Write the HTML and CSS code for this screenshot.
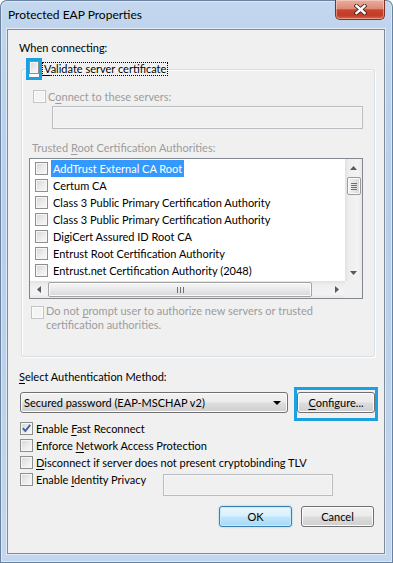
FILE: index.html
```html
<!DOCTYPE html>
<html>
<head>
<meta charset="utf-8">
<title>Protected EAP Properties</title>
<link rel="stylesheet" href="styles.css">
</head>
<body>
<div class="window">
  <div class="titlebar">
    <span class="title">Protected EAP Properties</span>
    <span class="close"><svg width="13" height="11" viewBox="0 0 13 11"><path d="M2.5 2 L10.5 9 M10.5 2 L2.5 9" stroke="#4a2018" stroke-width="4.2" stroke-linecap="square"/><path d="M2.5 2 L10.5 9 M10.5 2 L2.5 9" stroke="#fff" stroke-width="2.4" stroke-linecap="square"/></svg></span>
  </div>
  <div class="client">
    <div class="sec-label">When connecting:</div>
    <fieldset class="group">
      <legend class="legend">
        <span class="hl-box"><span class="cb cb-small"></span></span>
        <span class="focus"><u>V</u>alidate server certificate</span>
      </legend>
      <div class="gbody">
        <div class="connect"><span class="cb dis"></span><span class="clbl dis-text">C<u>o</u>nnect to these servers:</span></div>
        <div class="srv"></div>
        <div class="trl dis-text">Trusted <u>R</u>oot Certification Authorities:</div>
        <div class="list">
          <div class="items">
            <div class="item"><span class="cb"></span><span class="itxt sel">AddTrust External CA Root</span></div>
            <div class="item"><span class="cb"></span><span class="itxt">Certum CA</span></div>
            <div class="item"><span class="cb"></span><span class="itxt">Class 3 Public Primary Certification Authority</span></div>
            <div class="item"><span class="cb"></span><span class="itxt">Class 3 Public Primary Certification Authority</span></div>
            <div class="item"><span class="cb"></span><span class="itxt">DigiCert Assured ID Root CA</span></div>
            <div class="item"><span class="cb"></span><span class="itxt">Entrust Root Certification Authority</span></div>
            <div class="item"><span class="cb"></span><span class="itxt">Entrust.net Certification Authority (2048)</span></div>
          </div>
          <div class="vs">
            <div class="sarrow"><svg width="7" height="4" viewBox="0 0 7 4"><path d="M0 4 L3.5 0 L7 4 Z" fill="#5a5a5a"/></svg></div>
            <div class="vthumb"><span></span><span></span><span></span><span></span></div>
            <div class="sfill"></div>
            <div class="sarrow"><svg width="7" height="4" viewBox="0 0 7 4"><path d="M0 0 L3.5 4 L7 0 Z" fill="#5a5a5a"/></svg></div>
          </div>
          <div class="hs">
            <div class="sarrow"><svg width="4" height="7" viewBox="0 0 4 7"><path d="M4 0 L0 3.5 L4 7 Z" fill="#5a5a5a"/></svg></div>
            <div class="hthumb"><span></span><span></span><span></span></div>
            <div class="sfill"></div>
            <div class="sarrow"><svg width="4" height="7" viewBox="0 0 4 7"><path d="M0 0 L4 3.5 L0 7 Z" fill="#5a5a5a"/></svg></div>
          </div>
          <div class="corner"></div>
        </div>
        <div class="prompt"><span class="cb dis"></span><span class="ptxt dis-text">Do not <u>p</u>rompt user to authorize new servers or trusted<br>certification authorities.</span></div>
      </div>
    </fieldset>
    <div class="sec-label sel-lbl"><u>S</u>elect Authentication Method:</div>
    <div class="auth">
      <div class="btn combo"><span>Secured password (EAP-MSCHAP v2)</span><svg width="8" height="4" viewBox="0 0 8 4"><path d="M0 0 L8 0 L4 4 Z" fill="#000"/></svg></div>
      <div class="hl-btn"><div class="btn cfg"><u>C</u>onfigure...</div></div>
    </div>
    <div class="opts">
      <div class="opt"><span class="cb checked"><svg width="11" height="11" viewBox="0 0 11 11"><path d="M1.8 5.2 L4.3 8 L9.2 1.8" fill="none" stroke="#4c5f99" stroke-width="1.9"/></svg></span><span class="olbl">Enable <u>F</u>ast Reconnect</span></div>
      <div class="opt"><span class="cb"></span><span class="olbl">Enforce <u>N</u>etwork Access Protection</span></div>
      <div class="opt"><span class="cb"></span><span class="olbl"><u>D</u>isconnect if server does not present cryptobinding TLV</span></div>
      <div class="opt ident"><span class="cb"></span><span class="olbl idlbl">Enable <u>I</u>dentity Privacy</span><span class="idbox"></span></div>
    </div>
    <div class="actions">
      <div class="btn ok">OK</div>
      <div class="btn cancel">Cancel</div>
    </div>
  </div>
</div>
</body>
</html>
```

FILE: styles.css
```css
* { box-sizing: border-box; }
html, body { margin: 0; padding: 0; }
body {
  font-family: Lato, "Noto Sans", sans-serif;
  font-size: 11px;
  line-height: 15px;
  color: #000;
  background: #fff;
}
u { text-decoration: underline; text-underline-offset: 2px; }

.window {
  width: 393px;
  height: 563px;
  border-radius: 7px 7px 0 0;
  background: linear-gradient(180deg, #c3d7ee 0%, #bcd3ec 12%, #b7cfe9 40%, #bdd3ec 75%, #c3d7ee 100%);
  box-shadow: inset 0 0 0 1px #6a829f, inset 0 0 0 2px #dbe7f5;
  display: flex;
  flex-direction: column;
}
.titlebar {
  height: 29px;
  flex: none;
  display: flex;
  align-items: flex-start;
}
.title {
  padding: 7px 0 0 8px;
  font-size: 12px;
  color: #000;
}
.close {
  margin-left: auto;
  margin-right: 8px;
  width: 50px;
  height: 20px;
  border: 1px solid #7a3127;
  border-top: none;
  border-radius: 0 0 5px 5px;
  background: linear-gradient(180deg, #e9ad9e 0%, #dc8b79 45%, #c94530 52%, #c23a24 80%, #d9644a 100%);
  box-shadow: inset 0 0 0 1px rgba(255, 230, 220, 0.45);
  display: flex;
  align-items: center;
  justify-content: center;
}
.close svg { display: block; }

.client {
  margin: 0 8px 0 7px;
  height: 525px;
  border: 1px solid #7f8b99;
  background: #f0f0f0;
  padding-top: 10px;
  box-shadow: 0 0 0 1px rgba(255, 255, 255, 0.55);
}
.sec-label { margin-left: 11px; }

.group {
  margin: 3px 0 0 13px;
  width: 354px;
  padding: 0;
  border: 1px solid #d5dfe5;
  border-radius: 3px;
  box-shadow: inset 1px 1px 0 #ffffff, 1px 1px 0 #ffffff;
  min-width: 0;
}
.legend {
  padding: 0;
  margin-left: 4px;
  display: flex;
  align-items: center;
  height: 22px;
}
.hl-box {
  width: 16px;
  height: 22px;
  border: 3px solid #1ba1e2;
  background: #fff;
  display: flex;
  align-items: flex-start;
}
.focus {
  border: 1px dotted #000;
  padding: 0 1px 0 1px;
  height: 14px;
  line-height: 12px;
  display: inline-block;
}

.cb {
  flex: none;
  width: 13px;
  height: 13px;
  border: 1px solid #8e8f8f;
  background: linear-gradient(135deg, #d4d6d9 0%, #eeeeee 60%, #f8f8f8 100%);
  box-shadow: inset 0 0 0 1px #f6f6f6;
  display: inline-flex;
  align-items: center;
  justify-content: center;
}
.cb svg { display: block; }
.cb-small { width: 10px; height: 13px; }
.cb.dis {
  border-color: #c4c4c4;
  background: #f4f4f4;
  box-shadow: inset 0 0 0 1px #fbfbfb;
}
.dis-text { color: #9c9c9c; }

.gbody { padding: 9px 0 24px 0; }
.connect {
  display: flex;
  align-items: center;
  margin-left: 11px;
}
.clbl { margin-left: 2px; }
.srv {
  margin: 2px 0 0 30px;
  width: 311px;
  height: 23px;
  border: 1px solid #b9bcc0;
  background: #f0f0f0;
  box-shadow: inset 0 0 0 1px #f6f6f6;
}
.trl { margin: 11px 0 0 10px; }

.list {
  margin: 3px 0 0 7px;
  width: 334px;
  height: 141px;
  border: 1px solid #828790;
  background: #fff;
  display: grid;
  grid-template-columns: 1fr 17px;
  grid-template-rows: 1fr 17px;
}
.items {
  overflow: hidden;
  padding-top: 1px;
  min-width: 0;
}
.item {
  height: 17px;
  display: flex;
  align-items: center;
  white-space: nowrap;
}
.item .cb { margin-left: 5px; }
.itxt { margin-left: 3px; padding: 0 2px; line-height: 17px; }
.itxt.sel { background: #3399ff; color: #fff; }

.vs {
  display: flex;
  flex-direction: column;
  align-items: center;
  background: linear-gradient(90deg, #e2e2e2 0%, #efefef 25%, #f3f3f3 75%, #e8e8e8 100%);
}
.hs {
  display: flex;
  align-items: center;
  background: linear-gradient(180deg, #e2e2e2 0%, #efefef 25%, #f3f3f3 75%, #e8e8e8 100%);
}
.sarrow {
  width: 17px;
  height: 17px;
  flex: none;
  display: flex;
  align-items: center;
  justify-content: center;
}
.sfill { flex: 1; }
.vthumb {
  width: 14px;
  height: 18px;
  margin-top: 1px;
  border: 1px solid #9b9b9b;
  border-radius: 2px;
  background: linear-gradient(90deg, #f4f4f4, #e6e6e6 50%, #d6d6d6);
  box-shadow: inset 0 0 0 1px #fbfbfb;
  display: flex;
  flex-direction: column;
  align-items: center;
  justify-content: center;
  gap: 1px;
}
.vthumb span { width: 6px; height: 1px; background: #6f6f6f; }
.hthumb {
  width: 264px;
  height: 15px;
  margin-left: 1px;
  border: 1px solid #a3a3a3;
  border-radius: 2px;
  background: linear-gradient(180deg, #f6f6f6, #e9e9e9 50%, #d7d7d7);
  box-shadow: inset 0 0 0 1px #fbfbfb;
  display: flex;
  align-items: center;
  justify-content: center;
  gap: 2px;
}
.hthumb span { width: 1px; height: 6px; background: #6f6f6f; }
.corner { background: #f0f0f0; }

.prompt {
  display: flex;
  align-items: flex-start;
  margin: 5px 0 0 9px;
}
.prompt .cb { margin-top: 2px; }
.ptxt { margin-left: 2px; line-height: 14px; }

.sel-lbl { margin-top: 12px; }

.auth {
  display: flex;
  align-items: flex-start;
  margin: 3px 0 0 12px;
}
.btn {
  height: 21px;
  border: 1px solid #707070;
  border-radius: 3px;
  background: linear-gradient(180deg, #f2f2f2 0%, #ebebeb 48%, #dddddd 52%, #cfcfcf 100%);
  box-shadow: inset 0 0 0 1px #fcfcfc;
  display: flex;
  align-items: center;
  justify-content: center;
  line-height: 15px;
}
.combo {
  width: 268px;
  margin-top: 5px;
  justify-content: space-between;
  padding: 0 6px 0 3px;
}
.hl-btn {
  margin-left: 6px;
  border: 3px solid #1ba1e2;
  padding: 2px 0 5px 0;
}
.cfg { width: 78px; }

.opts { margin-top: -1px; }
.opt {
  height: 17px;
  display: flex;
  align-items: center;
  margin-left: 12px;
  white-space: nowrap;
}
.olbl { margin-left: 3px; }
.opt.ident { align-items: flex-start; height: 25px; }
.opt.ident .cb { margin-top: 2px; }
.opt.ident .olbl { margin-top: 1px; }
.idlbl { width: 127px; }
.idbox {
  margin-top: 3px;
  width: 170px;
  height: 22px;
  border: 1px solid #b9bcc0;
  background: #f0f0f0;
  box-shadow: inset 0 0 0 1px #f6f6f6;
}

.actions {
  display: flex;
  justify-content: flex-end;
  gap: 9px;
  margin: 10px 10px 0 0;
}
.ok, .cancel { width: 73px; }
.ok {
  border-color: #3c7fb1;
  background: linear-gradient(180deg, #eaf6fd 0%, #d9f0fc 48%, #bee6fd 52%, #a7d9f5 100%);
  box-shadow: inset 0 0 0 1px #c8ebfb, 0 0 2px #7fc6ee;
}
```
